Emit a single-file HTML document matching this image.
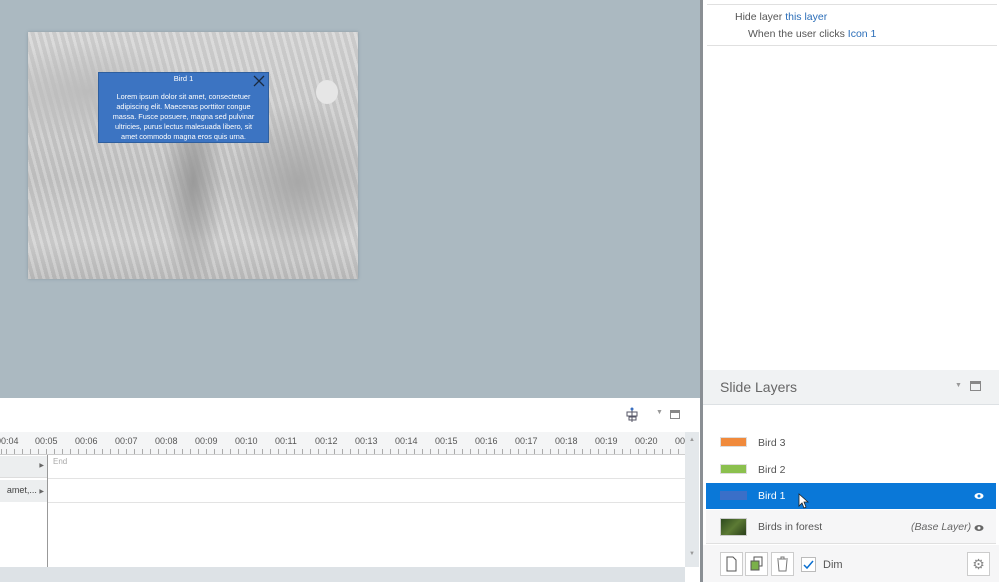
<!DOCTYPE html>
<html><head><style>
*{margin:0;padding:0;box-sizing:border-box}
body{width:999px;height:582px;overflow:hidden;position:relative;font-family:"Liberation Sans",sans-serif;background:#fff}
.a{position:absolute}
</style></head><body>
<div class="a" style="left:0;top:0;width:701px;height:398px;background:#abb9c1"></div>
<div class="a" style="left:28px;top:32px;width:330px;height:247px;background:
radial-gradient(ellipse 30px 110px at 165px 150px,#9a9a9a,transparent),
radial-gradient(ellipse 70px 80px at 270px 150px,#a8a8a8,transparent),
radial-gradient(ellipse 110px 50px at 60px 60px,#bcbcbc,transparent),
repeating-linear-gradient(75deg,rgba(255,255,255,.15) 0 3px,rgba(0,0,0,.05) 3px 7px),
linear-gradient(#d6d6d6,#c6c6c6 60%,#d2d2d2 85%,#bfbfbf);box-shadow:0 0 3px #8a98a0"></div>
<div class="a" style="left:316px;top:80px;width:22px;height:24px;border-radius:50%;background:#e6e6e6"></div>
<div class="a" style="left:98px;top:72px;width:171px;height:71px;background:#3c74c2;border:1px solid #2f5f9e;color:#fff;font-size:7.3px;text-align:center;line-height:10px">
<div style="margin-top:1px;font-size:7.5px">Bird 1</div>
<div style="margin-top:8px;padding:0 8px">Lorem ipsum dolor sit amet, consectetuer adipiscing elit. Maecenas porttitor congue massa. Fusce posuere, magna sed pulvinar ultricies, purus lectus malesuada libero, sit amet commodo magna eros quis urna.</div>
<svg class="a" style="left:153px;top:1px" width="14" height="14"><path d="M2 2L12 12M12 2L2 12" stroke="#1a2a40" stroke-width="1.3"/></svg>
</div>
<div class="a" style="left:0;top:398px;width:701px;height:184px;background:#fff"></div>
<svg class="a" style="left:625px;top:407px" width="14" height="16"><path d="M7 1V15M2 5H12V9H2ZM4 10H11V13H4Z" stroke="#556" fill="none" stroke-width="1"/><circle cx="7" cy="2" r="1.5" fill="#3a6fc0"/></svg>
<div class="a" style="left:656px;top:409px;font-size:7px;color:#999">▼</div>
<div class="a" style="left:670px;top:410px;width:10px;height:9px;border:1px solid #888;border-top-width:3px"></div>
<div class="a" style="left:0;top:432px;width:685px;height:23px;background:#f4f5f6;border-bottom:1px solid #ccc;font-size:9px;color:#555">
<div style="position:absolute;left:0;top:4px;white-space:nowrap">
<span style="position:absolute;left:-4px">00:04</span><span style="position:absolute;left:35px">00:05</span><span style="position:absolute;left:75px">00:06</span><span style="position:absolute;left:115px">00:07</span><span style="position:absolute;left:155px">00:08</span><span style="position:absolute;left:195px">00:09</span><span style="position:absolute;left:235px">00:10</span><span style="position:absolute;left:275px">00:11</span><span style="position:absolute;left:315px">00:12</span><span style="position:absolute;left:355px">00:13</span><span style="position:absolute;left:395px">00:14</span><span style="position:absolute;left:435px">00:15</span><span style="position:absolute;left:475px">00:16</span><span style="position:absolute;left:515px">00:17</span><span style="position:absolute;left:555px">00:18</span><span style="position:absolute;left:595px">00:19</span><span style="position:absolute;left:635px">00:20</span><span style="position:absolute;left:675px">00</span></div>
<div style="position:absolute;left:0;bottom:0;width:685px;height:5px;background:repeating-linear-gradient(90deg,#aaa 0 1px,transparent 1px 8px);background-position:6px 0"></div>
</div>
<div class="a" style="left:685px;top:432px;width:14px;height:135px;background:#e4e8eb"><div style="font-size:6px;color:#999;text-align:center;margin-top:5px">▲</div><div style="font-size:6px;color:#999;text-align:center;margin-top:108px">▼</div></div>
<div class="a" style="left:0;top:456px;width:47px;height:22px;background:#eceeef;border-bottom:1px solid #ddd;font-size:6px;color:#666;text-align:right;padding:6px 3px 0 0">▶</div>
<div class="a" style="left:0;top:480px;width:47px;height:22px;background:#eceeef;font-size:9px;color:#444;text-align:right;padding:5px 3px 0 0;white-space:nowrap">amet,... <span style="font-size:6px;color:#666">▶</span></div>
<div class="a" style="left:47px;top:455px;width:1px;height:112px;background:#999"></div>
<div class="a" style="left:48px;top:478px;width:637px;height:1px;background:#e3e3e3"></div>
<div class="a" style="left:48px;top:502px;width:637px;height:1px;background:#e3e3e3"></div>
<div class="a" style="left:53px;top:457px;font-size:8px;color:#aaa">End</div>
<div class="a" style="left:0;top:567px;width:685px;height:15px;background:#dde2e6"></div>
<div class="a" style="left:700px;top:0;width:3px;height:582px;background:#8a8f94"></div>
<div class="a" style="left:703px;top:0;width:296px;height:370px;background:#fff"></div>
<div class="a" style="left:707px;top:4px;width:290px;height:1px;background:#e0e0e0"></div>
<div class="a" style="left:735px;top:11px;font-size:10.5px;color:#555">Hide layer <span style="color:#2a6db8">this layer</span></div>
<div class="a" style="left:748px;top:28px;font-size:10.5px;color:#555">When the user clicks <span style="color:#2a6db8">Icon 1</span></div>
<div class="a" style="left:707px;top:45px;width:290px;height:1px;background:#e0e0e0"></div>
<div class="a" style="left:703px;top:370px;width:296px;height:35px;background:#f0f2f3;border-bottom:1px solid #dde1e4"></div>
<div class="a" style="left:720px;top:379px;font-size:14px;color:#666">Slide Layers</div>
<div class="a" style="left:955px;top:382px;font-size:7px;color:#999">▼</div>
<div class="a" style="left:970px;top:381px;width:11px;height:10px;border:1px solid #888;border-top-width:3px"></div>
<div class="a" style="left:720px;top:437px;width:27px;height:10px;background:#f08a3c;border:1px solid #ddd"></div>
<div class="a" style="left:758px;top:437px;font-size:10.5px;color:#555">Bird 3</div>
<div class="a" style="left:720px;top:464px;width:27px;height:10px;background:#8bc04e;border:1px solid #ddd"></div>
<div class="a" style="left:758px;top:464px;font-size:10.5px;color:#555">Bird 2</div>
<div class="a" style="left:706px;top:483px;width:290px;height:26px;background:#0a78d8"></div>
<div class="a" style="left:720px;top:491px;width:27px;height:9px;background:#3a6fc8"></div>
<div class="a" style="left:758px;top:490px;font-size:10.5px;color:#fff">Bird 1</div>
<svg class="a" style="left:797px;top:493px" width="12" height="16"><path d="M2 1V13L5 10L7 15L9 14L7 9H11Z" fill="#fff" stroke="#222" stroke-width=".8"/></svg>
<svg class="a" style="left:974px;top:492px" width="10" height="8"><ellipse cx="5" cy="4" rx="4.5" ry="3" fill="#fff"/><circle cx="5" cy="4" r="1.5" fill="#0a78d8"/></svg>
<div class="a" style="left:706px;top:510px;width:290px;height:34px;background:#f6f6f7;border-bottom:1px solid #e0e0e0"></div>
<div class="a" style="left:720px;top:518px;width:27px;height:18px;background:linear-gradient(135deg,#2d4a1e,#5c7a34,#2a3f1a);border:1px solid #ccc"></div>
<div class="a" style="left:758px;top:521px;font-size:10.5px;color:#555">Birds in forest</div>
<div class="a" style="left:911px;top:521px;font-size:10.5px;color:#666;font-style:italic">(Base Layer)</div>
<svg class="a" style="left:974px;top:524px" width="10" height="8"><ellipse cx="5" cy="4" rx="4.5" ry="3" fill="#666"/><circle cx="5" cy="4" r="1.5" fill="#fff"/></svg>
<div class="a" style="left:703px;top:545px;width:296px;height:37px;background:#f6f6f7"></div>
<div class="a" style="left:720px;top:552px;width:23px;height:24px;background:#fff;border:1px solid #ccc"><svg width="21" height="22"><path d="M6 4H12L15 7V18H6Z" fill="none" stroke="#555"/></svg></div>
<div class="a" style="left:745px;top:552px;width:23px;height:24px;background:#fff;border:1px solid #ccc"><svg width="21" height="22"><rect x="8" y="4" width="8" height="9" fill="#fff" stroke="#555"/><rect x="5" y="8" width="8" height="9" fill="#7ab04a" stroke="#555"/></svg></div>
<div class="a" style="left:771px;top:552px;width:23px;height:24px;background:#fff;border:1px solid #ccc"><svg width="21" height="22"><path d="M5 6H16M9 6V4H12V6M6 7L7 18H14L15 7" fill="none" stroke="#777"/></svg></div>
<div class="a" style="left:801px;top:557px;width:15px;height:15px;background:#fff;border:1px solid #bbb"><svg width="13" height="13"><path d="M2 7L5 10L11 3" fill="none" stroke="#0a6fd0" stroke-width="1.5"/></svg></div>
<div class="a" style="left:823px;top:559px;font-size:11px;color:#555">Dim</div>
<div class="a" style="left:967px;top:552px;width:23px;height:24px;background:#fff;border:1px solid #ccc;font-size:14px;color:#888;text-align:center;line-height:22px">⚙</div>
</body></html>
